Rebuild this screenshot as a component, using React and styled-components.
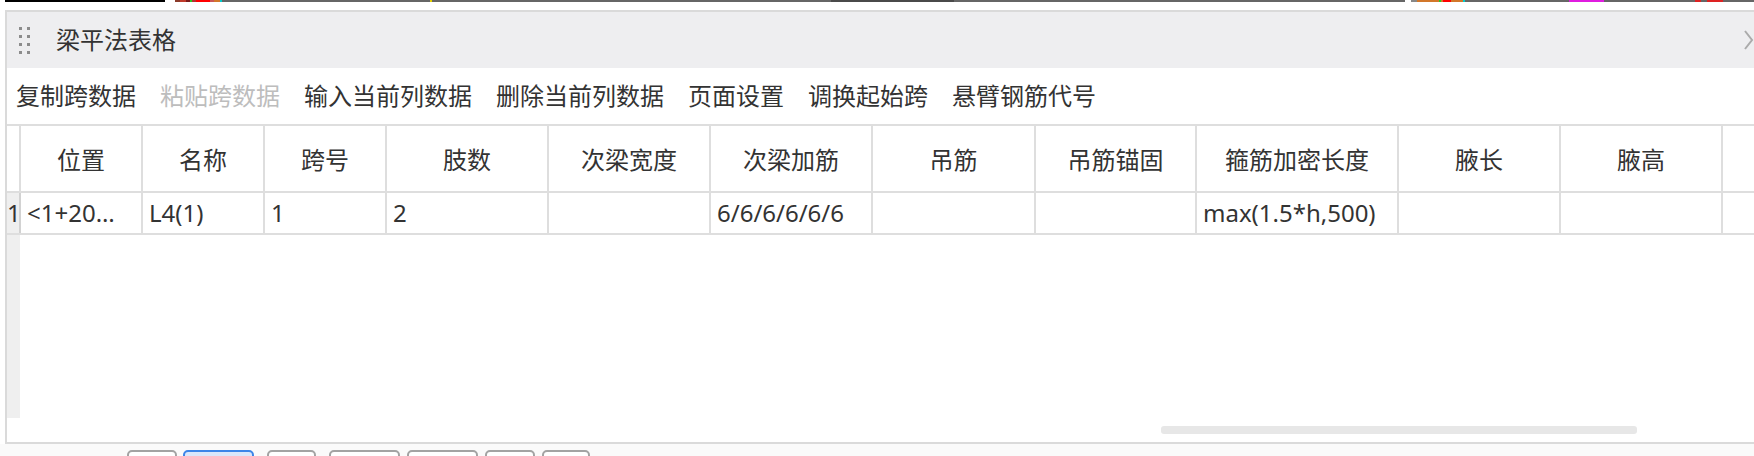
import React from "react";
import styled, { createGlobalStyle } from "styled-components";

const Global = createGlobalStyle`
  html, body { margin: 0; padding: 0; background: #ffffff; overflow: hidden; }
  body { font-family: "Noto Sans", "Noto Sans CJK SC", sans-serif; color: #333333; }
  * { box-sizing: border-box; }
`;

const Page = styled.div`
  width: 1754px;
  height: 456px;
  overflow: hidden;
  display: flex;
  flex-direction: column;
  & > * { flex-shrink: 0; }
`;

const Strip = styled.div`
  display: flex;
  height: 2px;
  width: 100%;
`;

const Seg = styled.div`
  flex: ${(p) => (p.$w ? `0 0 ${p.$w}px` : "1 1 auto")};
  background: ${(p) => p.$c};
`;

const Panel = styled.section`
  margin: 8px 0 0 5px;
  width: 1749px;
  border-top: 2px solid #dadada;
  border-left: 2px solid #dadada;
  border-bottom: 2px solid #dadada;
  display: flex;
  flex-direction: column;
  overflow: hidden;
  & > * { flex-shrink: 0; }
`;

const Header = styled.header`
  height: 56px;
  background: #eeeef0;
  display: flex;
  align-items: center;
  padding-left: 12px;
`;

const Handle = styled.div`
  display: grid;
  grid-template-columns: 3px 3px;
  grid-auto-rows: 3px;
  column-gap: 5px;
  row-gap: 5px;
  margin-top: 1px;
  span { background: #8c8c8c; }
`;

const Title = styled.h1`
  margin: 0 0 0 26px;
  font-size: 24px;
  font-weight: 400;
  line-height: 32px;
  color: #333333;
  flex: 1;
`;

const CloseIcon = styled.svg`
  width: 12px;
  height: 24px;
  flex: 0 0 12px;
`;

const Toolbar = styled.nav`
  height: 56px;
  display: flex;
  align-items: center;
  padding-left: 9px;
  gap: 24px;
`;

const ToolItem = styled.span`
  font-size: 24px;
  line-height: 32px;
  white-space: nowrap;
  color: ${(p) => (p.$disabled ? "#bdbdbd" : "#333333")};
  cursor: default;
`;

const COLS = "14px 122px 122px 122px 162px 162px 162px 163px 161px 202px 162px 162px 162px";

const Table = styled.div`
  border-top: 2px solid #dedede;
  display: flex;
  flex-direction: column;
  & > * { flex-shrink: 0; }
`;

const Row = styled.div`
  display: grid;
  grid-template-columns: ${COLS};
  height: ${(p) => p.$h}px;
  border-bottom: 2px solid #dedede;
`;

const Cell = styled.div`
  border-right: 2px solid #dedede;
  display: flex;
  align-items: center;
  justify-content: ${(p) => (p.$head ? "center" : "flex-start")};
  padding: ${(p) => (p.$head ? "3px 0 0" : "0 6px")};
  font-size: 24px;
  line-height: 32px;
  white-space: nowrap;
  overflow: hidden;
  color: #333333;
`;

const RowHead = styled.div`
  border-right: 2px solid ${(p) => (p.$gray ? "#d2d2d2" : "#dedede")};
  background: ${(p) => (p.$gray ? "#efefef" : "#ffffff")};
  font-size: 24px;
  line-height: 32px;
  display: flex;
  align-items: center;
  padding-left: 0;
  color: #333333;
`;

const Filler = styled.div`
  height: 183px;
  display: flex;
`;

const FillerGutter = styled.div`
  width: 13px;
  background: #efefef;
`;

const ScrollArea = styled.div`
  height: 24px;
  padding-top: 8px;
  padding-left: 1154px;
`;

const Thumb = styled.div`
  width: 476px;
  height: 8px;
  border-radius: 3px;
  background: #e7e7e7;
`;

const Footer = styled.footer`
  height: 40px;
  background: #fafafa;
  display: flex;
  align-items: flex-start;
  padding: 6px 0 0 127px;
`;

const PageBtn = styled.div`
  width: ${(p) => p.$w}px;
  margin-left: ${(p) => p.$ml}px;
  height: 30px;
  border: 2px solid ${(p) => (p.$active ? "#3d85e8" : "#a3a3a3")};
  background: ${(p) => (p.$active ? "#dae7fb" : "#ffffff")};
  border-radius: 5px;
  flex: 0 0 auto;
`;

const stripSegs = [
  [5, "#ffffff"], [160, "#000000"], [10, "#ffffff"], [5, "#8b3a2a"], [6, "#c0392b"],
  [4, "#7a1a1a"], [2, "#22cc22"], [4, "#b33333"], [14, "#ff0000"], [4, "#cc5555"],
  [6, "#d2772a"], [2, "#00cccc"], [208, "#666666"], [2, "#e6d200"], [399, "#666666"],
  [123, "#4a4a4a"], [451, "#666666"], [6, "#ffffff"], [6, "#888888"], [22, "#d2772a"],
  [2, "#22cc22"], [2, "#d2772a"], [8, "#ff0000"], [12, "#d2772a"], [2, "#00cccc"],
  [104, "#666666"], [35, "#e01ce0"], [91, "#666666"], [6, "#dd2222"], [6, "#666666"],
  [16, "#dd2222"], [0, "#666666"],
];

const tools = [
  { t: "复制跨数据" },
  { t: "粘贴跨数据", disabled: true },
  { t: "输入当前列数据" },
  { t: "删除当前列数据" },
  { t: "页面设置" },
  { t: "调换起始跨" },
  { t: "悬臂钢筋代号" },
];

const heads = ["位置", "名称", "跨号", "肢数", "次梁宽度", "次梁加筋", "吊筋", "吊筋锚固", "箍筋加密长度", "腋长", "腋高", ""];
const data = ["<1+20…", "L4(1)", "1", "2", "", "6/6/6/6/6/6", "", "", "max(1.5*h,500)", "", "", ""];

const buttons = [
  { w: 50, ml: 0 },
  { w: 71, ml: 6, active: true },
  { w: 49, ml: 13 },
  { w: 71, ml: 13 },
  { w: 71, ml: 7 },
  { w: 50, ml: 7 },
  { w: 48, ml: 7 },
];

export default function App() {
  return (
    <Page>
      <Global />
      <Strip>
        {stripSegs.map(([w, c], i) => (
          <Seg key={i} $w={w} $c={c} />
        ))}
      </Strip>
      <Panel>
        <Header>
          <Handle>
            {Array.from({ length: 8 }).map((_, i) => (
              <span key={i} />
            ))}
          </Handle>
          <Title>梁平法表格</Title>
          <CloseIcon viewBox="0 0 12 24">
            <polyline points="3,3 10,12 3,21" fill="none" stroke="#ababab" strokeWidth="2" />
          </CloseIcon>
        </Header>
        <Toolbar>
          {tools.map((x) => (
            <ToolItem key={x.t} $disabled={x.disabled}>
              {x.t}
            </ToolItem>
          ))}
        </Toolbar>
        <Table>
          <Row $h={67}>
            <RowHead />
            {heads.map((h, i) => (
              <Cell key={i} $head>
                {h}
              </Cell>
            ))}
          </Row>
          <Row $h={42}>
            <RowHead $gray>1</RowHead>
            {data.map((d, i) => (
              <Cell key={i}>{d}</Cell>
            ))}
          </Row>
          <Filler>
            <FillerGutter />
          </Filler>
          <ScrollArea>
            <Thumb />
          </ScrollArea>
        </Table>
      </Panel>
      <Footer>
        {buttons.map((b, i) => (
          <PageBtn key={i} $w={b.w} $ml={b.ml} $active={b.active} />
        ))}
      </Footer>
    </Page>
  );
}
